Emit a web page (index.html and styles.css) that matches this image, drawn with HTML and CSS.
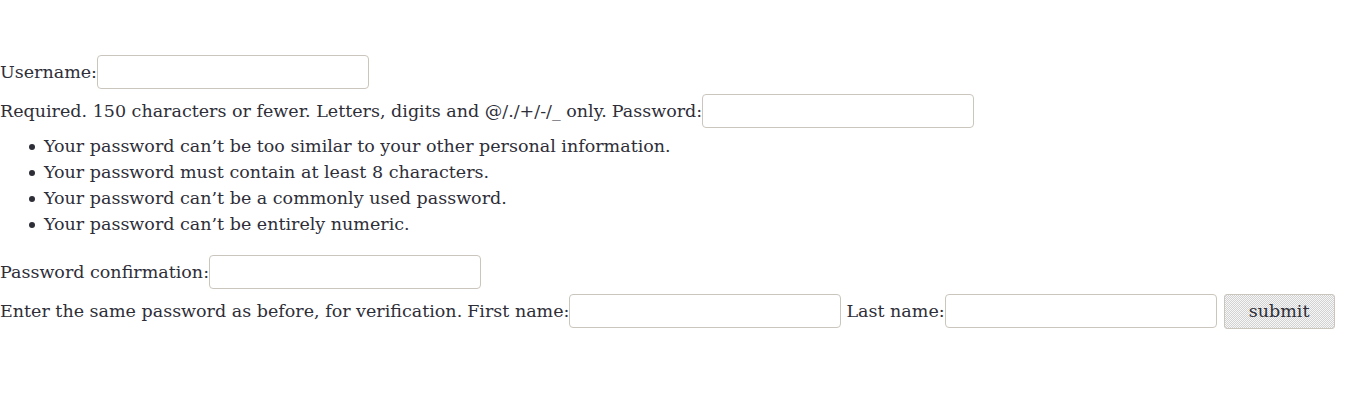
FILE: index.html
```html
<!DOCTYPE html>
<html>
<head>
<meta charset="utf-8">
<link rel="stylesheet" href="styles.css">
</head>
<body>
<form class="form">
  <div class="row">
    <label class="label">Username:</label><input class="field" type="text">
  </div>
  <div class="row">
    <span class="help">Required. 150 characters or fewer. Letters, digits and @/./+/-/_ only.</span>
    <label class="label">Password:</label><input class="field" type="password">
  </div>
  <ul class="rules">
    <li>Your password can’t be too similar to your other personal information.</li>
    <li>Your password must contain at least 8 characters.</li>
    <li>Your password can’t be a commonly used password.</li>
    <li>Your password can’t be entirely numeric.</li>
  </ul>
  <div class="row">
    <label class="label">Password confirmation:</label><input class="field" type="password">
  </div>
  <div class="row">
    <span class="help">Enter the same password as before, for verification.</span>
    <label class="label">First name:</label><input class="field" type="text">
    <label class="label gap">Last name:</label><input class="field" type="text">
    <button class="submit" type="button">submit</button>
  </div>
</form>
</body>
</html>
```
FILE: styles.css
```css
html, body {
  margin: 0;
  padding: 0;
  background: #ffffff;
}
body {
  font-family: "DejaVu Serif", serif;
  font-size: 17.5px;
  color: #2e2e38;
}
.form {
  padding-top: 55px;
}
.row {
  display: flex;
  align-items: center;
  height: 34px;
  margin-bottom: 5px;
  white-space: nowrap;
}
.help {
  margin-right: 5px;
}
.gap {
  margin-left: 5px;
}
.field {
  box-sizing: border-box;
  width: 272px;
  height: 34px;
  margin: 0;
  border: 1px solid #cbc6bd;
  border-radius: 4px;
  background: #ffffff;
  padding: 0 6px;
  font: inherit;
}
.rules {
  margin: 0 0 18px 0;
  padding: 0 0 0 44px;
  list-style: none;
}
.rules li {
  position: relative;
  height: 26px;
  line-height: 26px;
}
.rules li::before {
  content: "";
  position: absolute;
  left: -15px;
  top: 11px;
  width: 6px;
  height: 6px;
  border-radius: 50%;
  background: #2e2e38;
}
.submit {
  box-sizing: border-box;
  margin-left: 7px;
  width: 111px;
  height: 35px;
  border: 1px solid #cbc6bd;
  border-radius: 3px;
  font: inherit;
  color: #2e2e38;
  background-color: #e6e6e6;
  background-image: repeating-conic-gradient(#d2d2d2 0 25%, #f7f7f7 0 50%);
  background-size: 2px 2px;
  padding: 0;
}
```
